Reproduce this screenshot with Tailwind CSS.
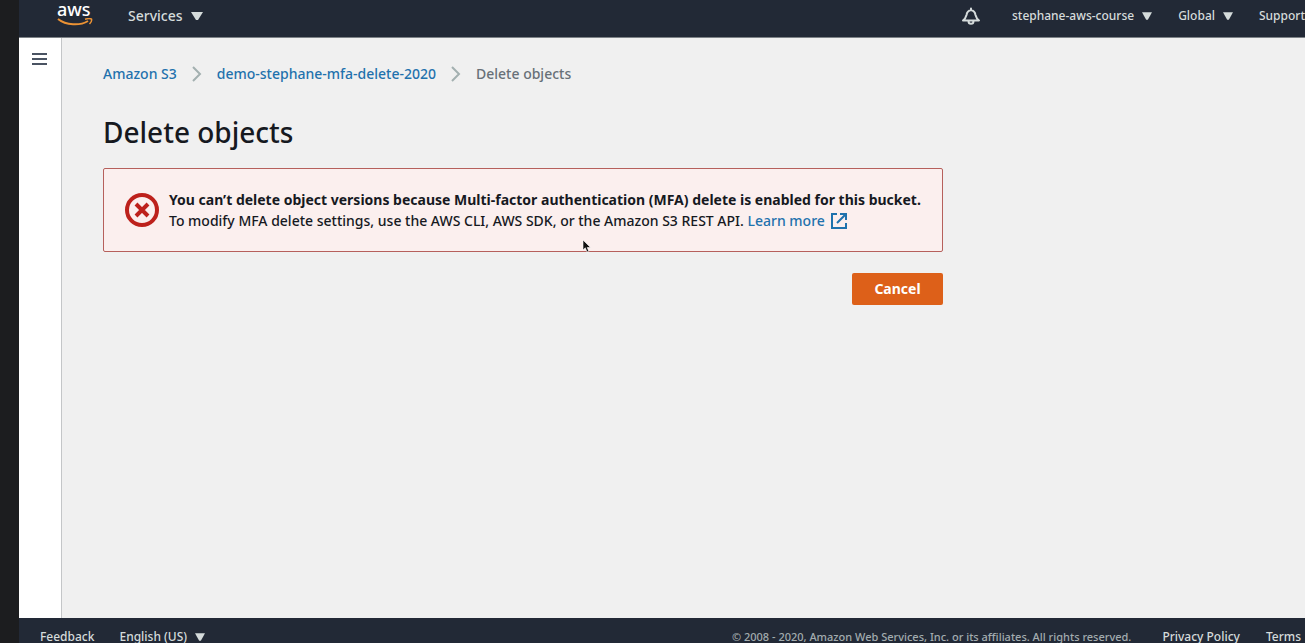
<!DOCTYPE html>
<html lang="en">
<head>
<meta charset="utf-8">
<meta name="viewport" content="width=device-width, initial-scale=1">
<title>Delete objects</title>
<script src="https://cdn.jsdelivr.net/npm/@tailwindcss/browser@4"></script>
</head>
<body class="flex h-screen overflow-hidden bg-[#f0f0f0] font-['Noto_Sans','Open_Sans',sans-serif] text-sm text-[#16191f]">
  <div class="w-[19px] shrink-0 bg-[#1c1d1f]"></div>
  <div class="flex min-w-0 flex-1 flex-col">
    <header class="flex h-[38px] shrink-0 items-start justify-between overflow-hidden whitespace-nowrap border-b border-[#7d8287] bg-[#222936] pl-[38px] text-[#d5dbdb]">
      <div class="flex items-start gap-[35px]">
        <a href="#" class="flex w-9 flex-col text-white">
          <span class="text-lg leading-[18px] font-medium">aws</span>
          <svg class="h-2 w-9" viewBox="0 0 36 8" fill="none" stroke="#ec9234" aria-hidden="true"><path d="M1 1C9 7.500 23 8 31 3" stroke-width="2"/><path d="M28 1.300C30.500 0.500 33 0.400 34.500 1C35 2.500 34 4.500 32.500 6" stroke-width="1.500"/></svg>
        </a>
        <button class="flex h-8 items-center gap-2 font-medium">Services<svg class="h-2 w-3" viewBox="0 0 12 8" fill="currentColor" aria-hidden="true"><path d="M0 0h12L7 8H5z"/></svg></button>
      </div>
      <nav class="flex h-8 items-center text-xs font-medium">
        <button class="mr-[31px]" aria-label="Notifications"><svg class="h-5 w-5" viewBox="0 0 20 20" fill="none" stroke="currentColor" stroke-width="2" stroke-linejoin="round" stroke-linecap="round"><path d="M2 14.500C4.500 12.500 5 11 5.500 9C6 6 7.500 4.500 10 4C12.500 4.500 14 6 14.500 9C15 11 15.500 12.500 18 14.500ZM10 2.500V4M7.500 15C7.500 18.800 12.500 18.800 12.500 15"/></svg></button>
        <button class="mr-[26px] flex items-center gap-2">stephane-aws-course<svg class="h-2 w-2.5" viewBox="0 0 12 9" fill="currentColor" aria-hidden="true"><path d="M0 0h12L7 9H5z"/></svg></button>
        <button class="mr-[26px] flex items-center gap-2">Global<svg class="h-2 w-2.5" viewBox="0 0 12 9" fill="currentColor" aria-hidden="true"><path d="M0 0h12L7 9H5z"/></svg></button>
        <button>Support</button>
      </nav>
    </header>
    <div class="flex min-h-0 flex-1">
      <aside class="w-[43px] shrink-0 border-r border-[#c4c6c8] bg-white pt-[11px] pl-3">
        <button class="flex h-5 w-5 items-center" aria-label="Open navigation"><svg class="h-4 w-5" viewBox="0 0 20 16" stroke="#4a5362" stroke-width="2" aria-hidden="true"><path d="M1 3h15M1 8h15M1 13h15"/></svg></button>
      </aside>
      <main class="min-w-0 flex-1 pt-[26px] pr-4 pl-[41px]">
        <nav class="flex items-center gap-3.5 leading-5 font-medium text-[#1f72ad]" aria-label="Breadcrumb">
          <a href="#">Amazon S3</a>
          <svg class="h-4 w-3" viewBox="0 0 12 16" fill="none" stroke="#a3b0b0" stroke-width="2" aria-hidden="true"><path d="M2 1l7 7l-7 7"/></svg>
          <a href="#">demo-stephane-mfa-delete-2020</a>
          <svg class="h-4 w-3" viewBox="0 0 12 16" fill="none" stroke="#a3b0b0" stroke-width="2" aria-hidden="true"><path d="M2 1l7 7l-7 7"/></svg>
          <span class="text-[#687078]">Delete objects</span>
        </nav>
        <h1 class="mt-7 text-[28px] leading-10 font-medium">Delete objects</h1>
        <div class="w-full max-w-[840px]">
          <section class="mt-4 flex min-h-[84px] items-center gap-[9px] rounded-xs border border-[#b6605c] bg-[#fbefee] pl-5" role="alert">
            <svg class="h-9 w-9 shrink-0" viewBox="0 0 36 36" fill="none" stroke="#bd211c" aria-hidden="true"><circle cx="18" cy="18" r="15" stroke-width="4"/><path d="M12 12l12 12M24 12L12 24" stroke-width="4"/></svg>
            <div class="leading-[21px]">
              <p class="font-bold">You can’t delete object versions because Multi-factor authentication (MFA) delete is enabled for this bucket.</p>
              <p class="font-medium">To modify MFA delete settings, use the AWS CLI, AWS SDK, or the Amazon S3 REST API. <a href="#" class="inline-flex items-center gap-1.5 text-[#1f72ad]">Learn more<svg class="h-4 w-4" viewBox="0 0 16 16" fill="none" stroke="currentColor" stroke-width="2" aria-hidden="true"><path d="M6 1H1v14h14v-5M9 1h6v6M15 1L6 10"/></svg></a></p>
            </div>
          </section>
          <div class="mt-[21px] flex justify-end">
            <button class="h-8 w-[91px] rounded-xs bg-[#dd6019] font-bold text-white">Cancel</button>
          </div>
        </div>
      </main>
    </div>
    <footer class="flex h-[25px] shrink-0 justify-between overflow-hidden whitespace-nowrap bg-[#222936] pt-[9px] pl-[21px] text-xs leading-5 font-medium text-[#d5dbdb]">
      <div class="flex items-start gap-[25px]">
        <a href="#">Feedback</a>
        <button class="flex h-5 items-center gap-2">English (US)<svg class="h-2 w-2.5" viewBox="0 0 12 9" fill="currentColor" aria-hidden="true"><path d="M0 0h12L7 9H5z"/></svg></button>
      </div>
      <div class="flex items-start pr-1">
        <span class="mr-[31px] text-[11px] text-[#a3acaf]">© 2008 - 2020, Amazon Web Services, Inc. or its affiliates. All rights reserved.</span>
        <a href="#" class="mr-[26px]">Privacy Policy</a>
        <a href="#">Terms</a>
      </div>
    </footer>
  </div>
  <svg class="pointer-events-none absolute top-[239px] left-[582px] h-3.5 w-2.5" viewBox="0 0 10 14" fill="#111" stroke="#fff" stroke-width="0.600" aria-hidden="true"><path d="M1 1v10l2.300-2.200L5 13l1.800-.8L5.200 8.500H8.500Z"/></svg>
</body>
</html>
